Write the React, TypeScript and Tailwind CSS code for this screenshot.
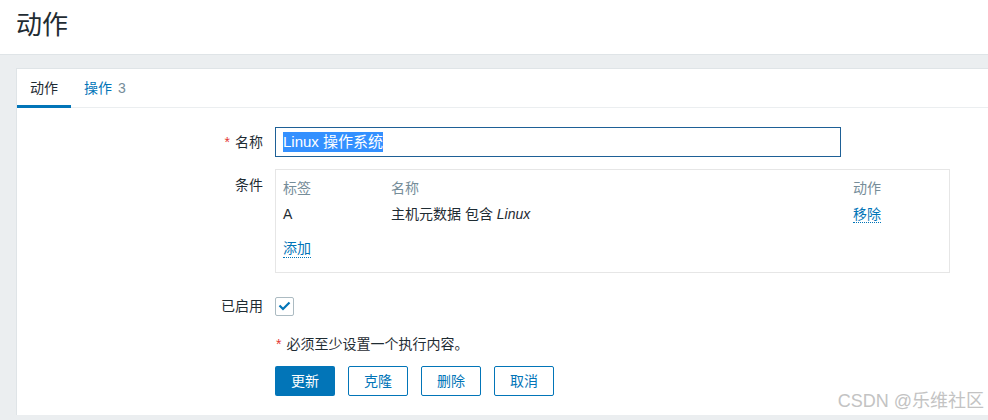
import React from 'react';

const font = { fontFamily: '"Liberation Sans", Arial, "Noto Sans CJK SC", sans-serif' };

function Label({ children, required }: { children: React.ReactNode; required?: boolean }) {
  return (
    <div className="w-[246px] shrink-0 pr-0 text-right text-[14px] leading-[20px] text-[#1f2c33]">
      {required && <span className="mr-[5px] text-[#e33734]">*</span>}
      {children}
    </div>
  );
}

function Link({ children }: { children: React.ReactNode }) {
  return (
    <span className="border-b border-dotted border-[#0275b8] leading-[18px] text-[#0275b8]">{children}</span>
  );
}

function OutlineButton({ label }: { label: string }) {
  return (
    <button className="h-[30px] w-[60px] rounded-[2px] border border-[#0275b8] bg-white text-[14px] text-[#0275b8]">
      {label}
    </button>
  );
}

export default function App() {
  return (
    <div className="relative h-[420px] w-[988px] overflow-hidden bg-[#ebeef0]" style={font}>
      {/* Page header */}
      <div className="h-[55px] border-b border-[#dfe4e7] bg-white pl-[16px] pt-[8px]">
        <h1 className="text-[26px] font-normal leading-[34px] text-[#1f2c33]">动作</h1>
      </div>

      {/* Panel */}
      <div className="ml-[16px] mt-[13px] h-[347px] border-l border-t border-[#dfe4e7] bg-white">
        {/* Tabs */}
        <div className="flex h-[39px] border-b border-[#ebeef0]">
          <div className="flex h-[39px] items-center border-b-[3px] border-[#0275b8] px-[13px] pt-[3px] text-[14px] text-[#1f2c33]">
            动作
          </div>
          <div className="flex h-[39px] items-center px-[13px] text-[14px] text-[#0275b8]">
            操作<span className="ml-[6px] text-[#768d99]">3</span>
          </div>
        </div>

        {/* Form */}
        <div className="pt-[19px]">
          <div className="flex items-center gap-[12px]">
            <Label required>名称</Label>
            <div className="flex h-[30px] w-[566px] items-center border border-[#1e6096] px-[7px]">
              <span className="bg-[#3390ff] text-[15px] leading-[20px] text-white">Linux 操作系统</span>
            </div>
          </div>

          <div className="mt-[12px] flex items-start gap-[12px]">
            <div className="pt-[6px]">
              <Label>条件</Label>
            </div>
            <div className="w-[675px] border border-[#e6e6e6] px-[7px] pb-[12px] pt-[6px] text-[14px]">
              <div className="grid h-[24px] grid-cols-[108px_462px_1fr] items-center text-[#768d99]">
                <span>标签</span>
                <span>名称</span>
                <span>动作</span>
              </div>
              <div className="grid h-[28px] grid-cols-[108px_462px_1fr] items-center text-[#1f2c33]">
                <span>A</span>
                <span>
                  主机元数据 包含 <i>Linux</i>
                </span>
                <span>
                  <Link>移除</Link>
                </span>
              </div>
              <div className="mt-[8px] flex h-[24px] items-center">
                <Link>添加</Link>
              </div>
            </div>
          </div>

          <div className="mt-[23px] flex items-center gap-[12px]">
            <Label>已启用</Label>
            <div className="flex h-[19px] w-[19px] items-center justify-center rounded-[2px] border border-[#acbbc2] bg-white">
              <svg width="13" height="10" viewBox="0 0 13 10" fill="none">
                <path d="M1.5 4.5 L5 8 L11.5 1.5" stroke="#0275b8" strokeWidth="2.2" />
              </svg>
            </div>
          </div>

          <div className="mt-[18px] flex h-[20px] items-center pl-[259px] text-[14px] text-[#1f2c33]">
            <span className="mr-[5px] text-[#e33734]">*</span>必须至少设置一个执行内容。
          </div>

          <div className="mt-[12px] flex gap-[13px] pl-[258px]">
            <button className="h-[30px] w-[60px] rounded-[2px] bg-[#0275b8] text-[14px] text-white">更新</button>
            <OutlineButton label="克隆" />
            <OutlineButton label="删除" />
            <OutlineButton label="取消" />
          </div>
        </div>
      </div>

      {/* Watermark */}
      <div className="absolute bottom-[8px] right-[4px] text-[18px] leading-[22px] text-[#c3c3c3]">CSDN @乐维社区</div>
    </div>
  );
}
